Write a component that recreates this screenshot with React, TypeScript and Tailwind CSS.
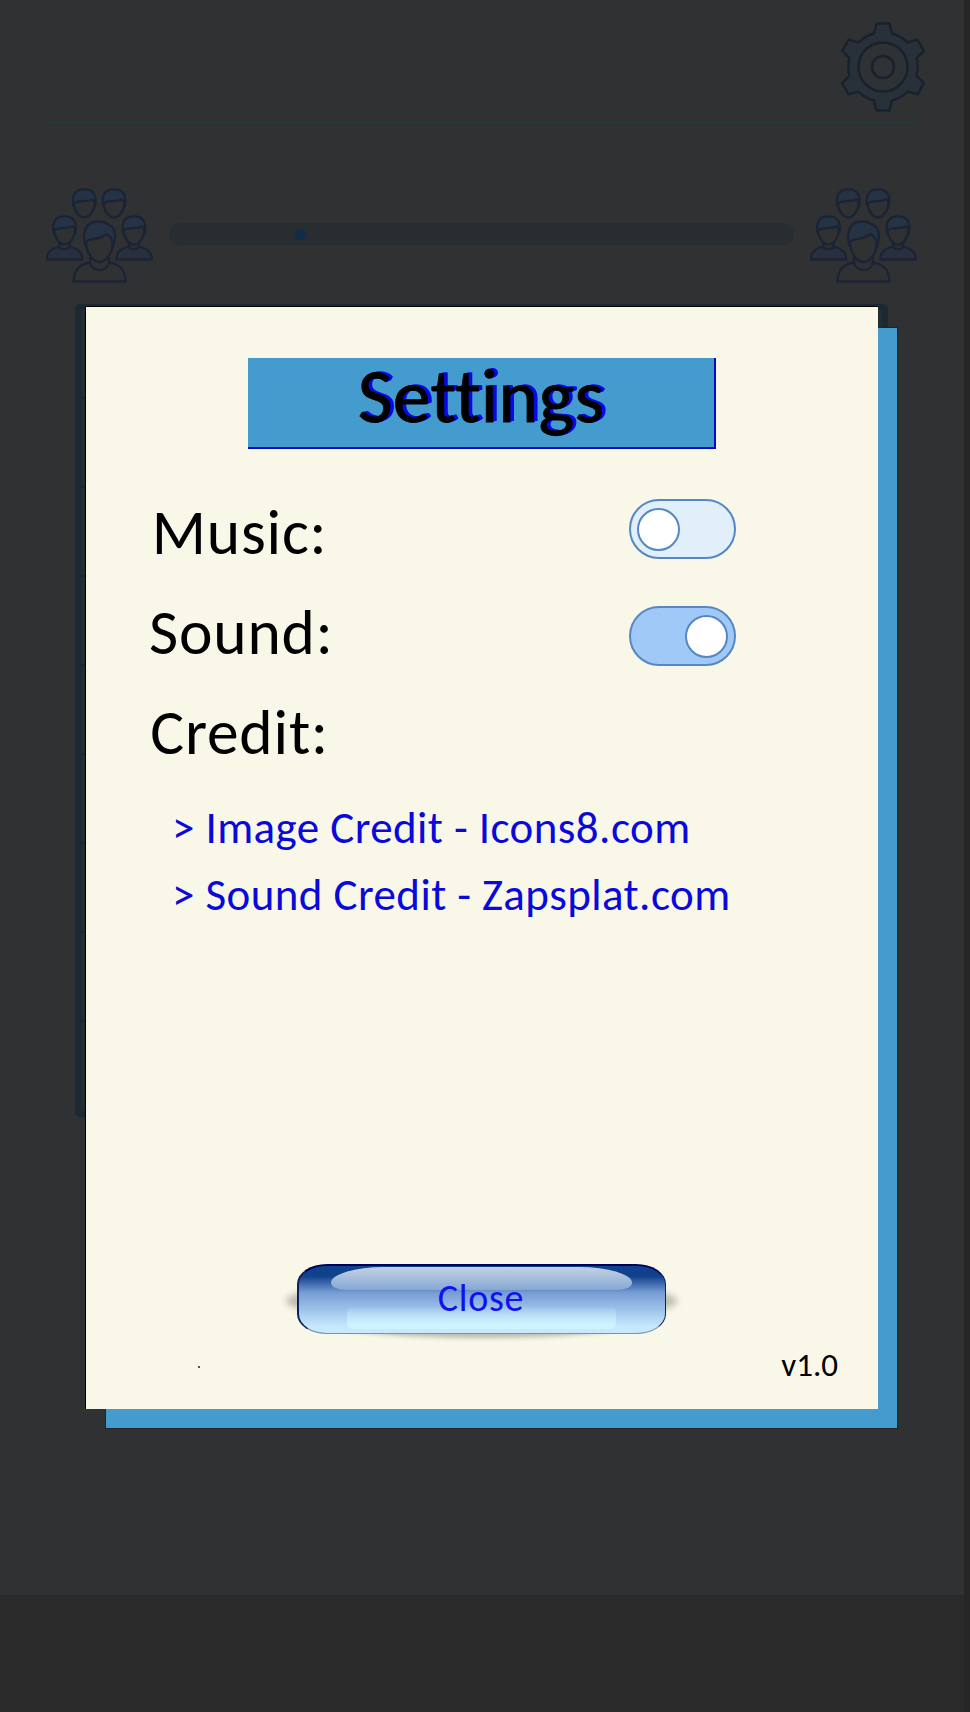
import { useState } from "react";

const teeth = [0, 60, 120, 180, 240, 300];

function rotate(x: number, y: number, deg: number) {
    const a = (deg * Math.PI) / 180;
    const rx = x * Math.cos(a) - y * Math.sin(a);
    const ry = x * Math.sin(a) + y * Math.cos(a);
    return `${rx.toFixed(2)} ${ry.toFixed(2)}`;
}

const gearPath =
    teeth
        .map((deg, i) => {
            const start = i === 0 ? "M" : "A34.5 34.5 0 0 1 ";
            return `${start}${rotate(-9, -33.5, deg)}L${rotate(-6.5, -43.5, deg)}L${rotate(6.5, -43.5, deg)}L${rotate(9, -33.5, deg)}`;
        })
        .join("") + `A34.5 34.5 0 0 1 ${rotate(-9, -33.5, 0)}Z`;

function Gear() {
    return (
        <svg viewBox="-45 -45 90 90" className="h-[90px] w-[90px]" stroke="#19212c" strokeWidth="2.4">
            <path d={gearPath} fill="#28303a" strokeLinejoin="round" />
            <circle r="24.5" fill="#2f3234" />
            <circle r="11" fill="#303235" />
        </svg>
    );
}

function SmallHead({ x, y }: { x: number; y: number }) {
    return (
        <g transform={`translate(${x} ${y})`}>
            <path d="M-10.5 13C-11 20 -6 29 0 29C6 29 11 20 10.5 13" fill="none" />
            <path d="M-11 17C-12.5 6 -9 .8 0 .8C9 .8 12.5 6 11 17C10.5 13.5 9.5 11.5 8 10.8C3 13.5 -3 12.2 -8 13.5C-10 14 -10.5 15 -11 17Z" fill="#263345" />
        </g>
    );
}

function SidePerson({ x }: { x: number }) {
    return (
        <g transform={`translate(${x} 0)`}>
            <path d="M-17.8 71.5C-17.5 63 -12 60.5 -5.5 58.5C-4 62 4 62 5.5 58.5C12 60.5 17.5 63 17.8 71.5Z" fill="#28303d" />
            <path d="M-5 54V59M5 54V59" />
            <SmallHead x={0} y={27.5} />
        </g>
    );
}

function People() {
    return (
        <svg viewBox="0 0 107 96" className="h-[96px] w-[107px]" fill="none" stroke="#1b2435" strokeWidth="2.3" strokeLinejoin="round">
            <SmallHead x={38.3} y={0.5} />
            <SmallHead x={68} y={0.5} />
            <SidePerson x={18.5} />
            <SidePerson x={88} />
            <path d="M27.5 93.5C28 81 34 76 44 74.5C46 84.5 61 84.5 63 74.5C73 76 79 81 79.5 93.5Z" />
            <path d="M44 69V76M63 69V76" />
            <path d="M40 54C40 63 46 74 53.5 74C61 74 67 63 67 54" fill="#303133" />
            <path d="M39.5 58C36 45 39 33.5 52 33.5C59 33.5 62 36 63.5 37.5C69 39 70.5 48 67 59C67 53 65 48 60.5 46C54 51.5 46 50.5 41.5 52.5C40 53.5 39.8 55 39.5 58Z" fill="#263345" />
        </svg>
    );
}

function Toggle({ on, onClick }: { on: boolean; onClick: () => void }) {
    return (
        <button
            onClick={onClick}
            className={`flex h-[60px] w-[107px] items-center rounded-full border-2 border-[#5487c4] px-[6px] ${on ? "justify-end bg-[#a0c9f8]" : "justify-start bg-[#e1effa]"}`}
        >
            <span className="block h-[43px] w-[43px] rounded-full border-2 border-[#5487c4] bg-white" />
        </button>
    );
}

export default function App() {
    const [music, setMusic] = useState(false);
    const [sound, setSound] = useState(true);

    return (
        <div className="relative h-[1712px] w-[970px] overflow-hidden bg-[#262626] font-['Carlito','Lato',sans-serif] [font-variant-ligatures:none]">
            <div className="h-[1712px] w-[964px] bg-[#2a2a2a]">
                <div className="h-[1595px] bg-[#303132]">
                    <header className="mx-[45px] flex h-[124px] justify-end border-b-2 border-[#223a3e] pt-[22px]">
                        <div className="-mr-[9px]"><Gear /></div>
                    </header>

                    <div className="mt-[64px] ml-[46px] flex w-[872px] items-start">
                        <People />
                        <div className="mt-[35px] ml-[16px] flex h-[22px] w-[625px] items-center rounded-full bg-[#272d31] pl-[126px]">
                            <span className="block h-[11px] w-[11px] rounded-full bg-[#112b49]" />
                        </div>
                        <div className="ml-[16px]"><People /></div>
                    </div>

                    <div className="mt-[20px] ml-[75px] grid h-[813px] w-[813px] grid-rows-9 divide-y-2 divide-[#1b262d] rounded-[5px] border-[6px] border-[#1b2a32] bg-[#252d32]">
                        {Array.from({ length: 9 }, (_, i) => <div key={i} />)}
                    </div>
                </div>
            </div>

            {/* settings dialog */}
            <div className="absolute top-[327px] left-[105px] h-[1102px] w-[793px] border border-[#202628] bg-[#439bce]" />
            <div className="absolute top-[306px] left-[85px] flex h-[1103px] w-[793px] flex-col border-t border-l border-black bg-[#f9f7e8]">
                <div className="mt-[51px] ml-[162px] flex h-[91px] w-[468px] justify-center border-r-2 border-b-2 border-[#0808c8] bg-[#439bce]">
                    <h1 className="text-[76px] leading-[76px] tracking-[0.2px] text-black [-webkit-text-stroke:0.8px_black] [text-shadow:1.500px_-0.500px_0_#0909e6,3px_-1px_0_#0909e6,4px_-1px_0_#0909e6]">Settings</h1>
                </div>

                <div className="mt-[50px] flex h-[262px] justify-between pr-[142px] pl-[63px]">
                    <div className="flex w-[181px] flex-col gap-[40px] pt-[4px] text-center text-[63.5px] leading-[60px] tracking-[0.8px] text-black">
                        <p>Music:</p>
                        <p>Sound:</p>
                        <p>Credit:</p>
                    </div>
                    <div className="flex flex-col gap-[47px]">
                        <Toggle on={music} onClick={() => setMusic(!music)} />
                        <Toggle on={sound} onClick={() => setSound(!sound)} />
                    </div>
                </div>

                <div className="mt-[42px] flex flex-col items-start gap-[17px] pl-[86px] text-[45px] leading-[50px] tracking-[0.430px] text-[#0909dc]">
                    <a className="whitespace-nowrap">&gt; Image Credit - Icons8.com</a>
                    <a className="whitespace-nowrap">&gt; Sound Credit - Zapsplat.com</a>
                </div>

                <div className="relative mt-[344px] ml-[211px] h-[70px] w-[369px]">
                    <div className="absolute top-[14px] -left-[11px] h-[46px] w-[391px] rounded-[50%] bg-[#bfbdb2] blur-[3px]" />
                    <div className="absolute top-[44px] left-[30px] h-[30px] w-[309px] rounded-[50%] bg-[#bfbdb2] blur-[2px]" />
                    <button className="relative flex h-[70px] w-[369px] justify-center overflow-hidden rounded-[30px/20px] border-t-2 border-r border-b border-l-2 border-t-[#00005c] border-r-[#10205c] border-b-[#7095b5] border-l-[#10205c] bg-linear-to-b from-[#0f418c] from-15% via-[#779dd5] via-40% to-[#c6e9fd] to-90%">
                        <span className="absolute top-px left-[32px] h-[23px] w-[301px] [border-radius:60px_60px_18px_18px/18px_18px_8px_8px] bg-linear-to-b from-[#c3d1e3] to-[#86a8d3]" />
                        <span className="absolute top-[40px] left-[48px] h-[23px] w-[269px] rounded-[6px] bg-linear-to-b from-[#b5d7f700] to-[#d0f5ff]" />
                        <span className="relative right-px text-[38px] leading-[64px] tracking-[0.700px] text-[#1010f0]">Close</span>
                    </button>
                </div>

                <div className="mt-[6px] flex h-[50px] items-center justify-between pr-[40px] pl-[112px]">
                    <span className="mt-[4px] block h-[2px] w-[2px] bg-[#55544f]" />
                    <span className="text-[33px] leading-[40px] text-black">v1.0</span>
                </div>
            </div>
        </div>
    );
}
